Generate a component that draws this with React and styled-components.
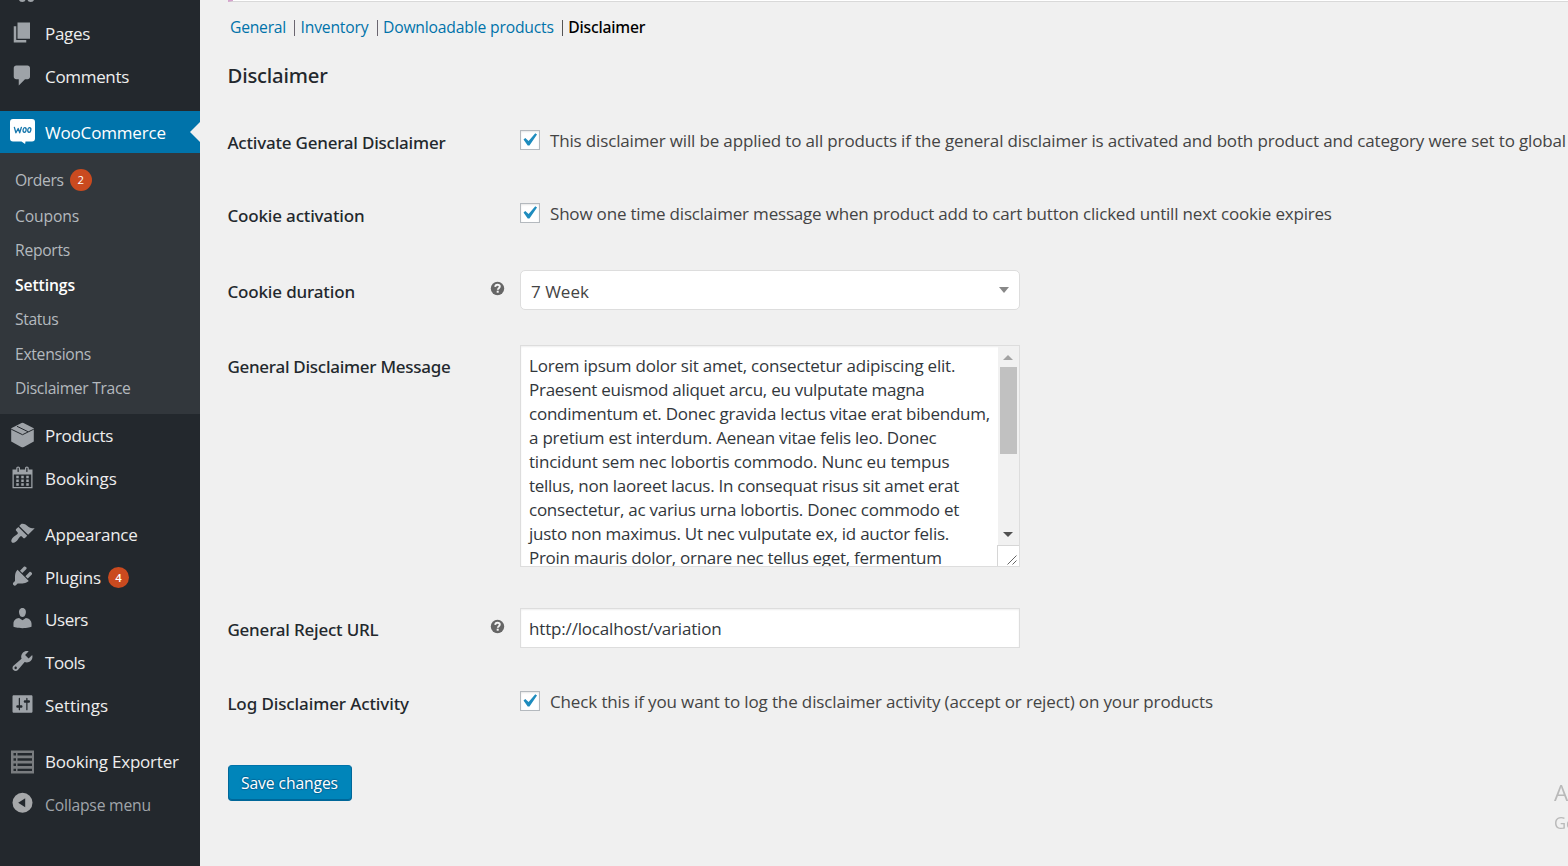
import React from 'react';
import styled, { createGlobalStyle, css } from 'styled-components';

const GlobalStyle = createGlobalStyle`
  * { box-sizing: border-box; }
  html, body { margin: 0; padding: 0; }
  body {
    background: #f0f0f0;
    color: #444;
    font-family: "Open Sans", "Noto Sans", sans-serif;
    font-size: 17px;
    overflow: hidden;
  }
`;

const Page = styled.div`
  display: flex;
  width: 1568px;
  height: 866px;
  overflow: hidden;
`;

/* ---------- admin menu ---------- */

const Sidebar = styled.nav`
  width: 200px;
  flex: none;
  background: #23282d;
  display: flex;
  flex-direction: column;
  overflow: hidden;
`;

const PeekRow = styled.div`
  display: flex;
  align-items: flex-start;
  flex: none;
  height: 12.2px;
  padding-left: 18px;
`;

const MenuRow = styled.a`
  position: relative;
  display: flex;
  align-items: center;
  flex: none;
  height: ${(p) => (p.$active ? 42 : 42.8)}px;
  padding-left: 10px;
  color: ${(p) => (p.$muted ? '#a0a5aa' : p.$active ? '#fff' : '#eee')};
  background: ${(p) => (p.$active ? '#0073aa' : 'transparent')};
  font-size: ${(p) => (p.$muted ? 15.7 : 17)}px;
  svg { flex: none; margin-right: 10px; }
  > span:first-of-type { padding-top: ${(p) => (p.$active ? 2 : 1.2)}px; }
`;

const Pointer = styled.span`
  position: absolute;
  right: 0;
  top: 11px;
  border: 10px solid transparent;
  border-right-color: #f0f0f0;
  border-left: 0;
`;

const Gap = styled.div`
  flex: none;
  height: ${(p) => p.$h}px;
`;

const Label = styled.span`
  white-space: pre;
  line-height: 24px;
  letter-spacing: ${(p) => p.$ls || 0}px;
`;

const Badge = styled.span`
  display: flex;
  align-items: center;
  justify-content: center;
  width: ${(p) => p.$size}px;
  height: ${(p) => p.$size}px;
  margin-left: ${(p) => (p.$bold ? 7 : 6.3)}px;
  border-radius: 50%;
  background: #ca4a1f;
  color: #fff;
  font-size: 11.3px;
  font-weight: ${(p) => (p.$bold ? 600 : 400)};
`;

const SubMenu = styled.div`
  flex: none;
  height: 261px;
  padding: 8px 0 0 15px;
  background: #32373c;
  display: flex;
  flex-direction: column;
`;

const SubRow = styled.a`
  display: flex;
  align-items: center;
  flex: none;
  height: ${(p) => p.$h || 34.45}px;
  font-size: 15.7px;
  color: #b4b9be;
  ${(p) => p.$current && css`
    color: #fff;
    font-weight: 600;
  `}
`;

/* ---------- content ---------- */

const Main = styled.main`
  flex: 1;
  min-width: 0;
  padding-left: 28px;
  overflow: hidden;
`;

const Notice = styled.div`
  height: 2px;
  background: #fff;
  border-left: 5px solid #d5a5cd;
  border-bottom: 1px solid #d9d9d9;
`;

const Tabs = styled.div`
  display: flex;
  align-items: center;
  height: 24px;
  margin: 13px 0 0 2px;
  font-size: 15.7px;
  color: #0073aa;
`;

const Bar = styled.span`
  width: 1px;
  height: 16px;
  margin: 1px 5px 0 8.5px;
  background: ${(p) => (p.$dark ? '#555' : '#6b6670')};
`;

const CurrentTab = styled(Label)`
  color: #000;
  font-family: "Noto Sans", sans-serif;
  font-weight: 500;
`;

const Heading = styled.h2`
  margin: 20px 0 0 -0.5px;
  height: 32px;
  color: #23282d;
  font: 500 20.3px/32px "Noto Sans", sans-serif;
  letter-spacing: -0.2px;
`;

const FieldRow = styled.div`
  display: grid;
  grid-template-columns: 262px 30px auto;
  justify-content: start;
  align-items: start;
  height: ${(p) => p.$h}px;
`;

const FieldLabel = styled(Label)`
  margin-left: -0.6px;
  padding-top: 1px;
  color: #23282d;
  font-family: "Noto Sans", sans-serif;
  font-weight: 500;
`;

const TipCell = styled.div`
  height: 0;
  margin-top: -1px;
`;

const Control = styled.div`
  margin-top: ${(p) => p.$top}px;
`;

const CheckLine = styled.label`
  display: flex;
  align-items: center;
  height: 24px;
  gap: 10px;
  > span:last-child { padding-top: 2px; }
`;

const CheckBox = styled.span`
  flex: none;
  width: 20px;
  height: 20px;
  margin-top: -1px;
  border: 1px solid #b4b9be;
  background: #fff;
  box-shadow: inset 0 1px 2px rgba(0, 0, 0, 0.1);
  display: flex;
  svg { margin: -3.6px 0 0 -5px; flex: none; }
`;

const Select = styled.div`
  width: 500px;
  height: 40px;
  border: 1px solid #ddd;
  border-radius: 5px;
  background: #fff;
  padding: 0 10px 0 10px;
  display: flex;
  align-items: center;
  justify-content: space-between;
  color: #444;
  > span:first-child { padding-top: 4px; }
`;

const Arrow = styled.span`
  display: block;
  width: 0;
  height: 0;
  border: 5px solid transparent;
  ${(p) => (p.$up
    ? css`border-bottom: ${p.$h}px solid ${p.$color}; border-top: 0;`
    : css`border-top: ${p.$h}px solid ${p.$color}; border-bottom: 0;`)}
`;

const Area = styled.div`
  width: 500px;
  height: 222px;
  display: flex;
  border: 1px solid #ddd;
  background: #fff;
  box-shadow: inset 0 1px 2px rgba(0, 0, 0, 0.07);
`;

const AreaText = styled.div`
  flex: 1;
  min-width: 0;
  height: 220px;
  overflow: hidden;
  padding: 8px 0 0 8px;
  color: #32373c;
  display: flex;
  flex-direction: column;
  span { flex: none; }
`;

const ScrollBar = styled.div`
  width: 21px;
  display: flex;
  flex-direction: column;
  align-items: center;
  background: #f1f1f1;
`;

const UpBox = styled.div`
  flex: none;
  height: 21px;
  padding-top: 9px;
  margin-left: -1px;
`;

const Thumb = styled.div`
  flex: none;
  width: 17px;
  height: 87px;
  background: #c1c1c1;
`;

const DownBox = styled.div`
  flex: none;
  margin: auto 0 0 -1px;
  height: 13px;
`;

const Grip = styled.div`
  width: 22px;
  height: 21px;
  margin-left: -1px;
  flex: none;
  background: #fff;
  border: 1px solid #d6d6d6;
  border-width: 1px 0 0 1px;
`;

const Input = styled.div`
  width: 500px;
  height: 40px;
  border: 1px solid #ddd;
  background: #fff;
  box-shadow: inset 0 1px 2px rgba(0, 0, 0, 0.07);
  padding: 1px 8px 0;
  display: flex;
  align-items: center;
  color: #32373c;
`;

const SaveButton = styled.button`
  display: flex;
  align-items: center;
  justify-content: center;
  width: 124px;
  height: 36px;
  padding: 0 1px 0 0;
  border: 1px solid #0073aa;
  border-color: #0073aa #006799 #006799;
  border-radius: 4px;
  background: #0085ba;
  box-shadow: inset 0 -1px 0 #006799;
  color: #fff;
  font: 400 15.7px "Open Sans", sans-serif;
  text-shadow: 0 -1px 1px #006799, 1px 0 1px #006799, 0 1px 1px #006799, -1px 0 1px #006799;
`;

const Watermark = styled.div`
  position: fixed;
  left: 1554px;
  top: 778px;
  width: 14px;
  overflow: hidden;
  white-space: nowrap;
  color: #b9b9b9;
  font-size: 22.5px;
  line-height: 30px;
`;

const WatermarkSmall = styled.div`
  font-size: 16.6px;
  line-height: 30px;
`;

/* ---------- icons ---------- */

const PATHS = {
  pages: 'M6 15V2h10v13H6zm-1 1h8v2H3V5h2v11z',
  comments: 'M5 2h9c1.1 0 2 .9 2 2v7c0 1.1-.9 2-2 2h-2l-5 5v-5H5c-1.1 0-2-.9-2-2V4c0-1.1.9-2 2-2z',
  calendar: 'M15 4h3v15H2V4h3V3c0-.41.15-.76.44-1.06.29-.29.65-.44 1.06-.44s.77.15 1.06.44c.29.3.44.65.44 1.06v1h4V3c0-.41.15-.76.44-1.06.29-.29.65-.44 1.06-.44s.77.15 1.06.44c.29.3.44.65.44 1.06v1zM6 3v2.5c0 .14.05.26.15.36.09.09.21.14.35.14s.26-.05.35-.14c.1-.1.15-.22.15-.36V3c0-.14-.05-.26-.15-.35-.09-.1-.21-.15-.35-.15s-.26.05-.35.15c-.1.09-.15.21-.15.35zm7 0v2.5c0 .14.05.26.14.36.1.09.22.14.36.14s.26-.05.36-.14c.09-.1.14-.22.14-.36V3c0-.14-.05-.26-.14-.35-.1-.1-.22-.15-.36-.15s-.26.05-.36.15c-.09.09-.14.21-.14.35zm4 15V8H3v10h14zM7 9v2H5V9h2zm2 0h2v2H9V9zm4 2V9h2v2h-2zm-6 1v2H5v-2h2zm2 0h2v2H9v-2zm4 2v-2h2v2h-2zm-6 1v2H5v-2h2zm4 2H9v-2h2v2zm4 0h-2v-2h2v2z',
  appearance: 'M14.48 11.06L7.41 3.99l1.5-1.5c.5-.56 2.3-.47 3.51.32 1.21.8 1.43 1.28 2.91 2.1 1.18.64 2.45 1.26 4.45.85zm-.71.71L6.7 4.7 4.93 6.47c-.39.39-.39 1.02 0 1.41l1.06 1.06c.39.39.39 1.03 0 1.42-.6.6-1.43 1.11-2.21 1.69-.35.26-.7.53-1.01.84C1.43 14.23.4 16.08 1.4 17.07c.99 1 2.84-.03 4.18-1.36.31-.31.58-.66.85-1.02.57-.78 1.08-1.61 1.69-2.21.39-.39 1.02-.39 1.41 0l1.06 1.06c.39.39 1.02.39 1.41 0z',
  plugins: 'M13.11 4.36L9.87 7.6 8 5.73l3.24-3.24c.35-.34 1.05-.2 1.56.32.52.51.66 1.21.31 1.55zm-8 1.77l.91-1.12 9.01 9.01-1.19.84c-.71.71-2.63 1.16-3.82 1.16H6.14L4.9 17.26c-.59.59-1.54.59-2.12 0-.59-.58-.59-1.53 0-2.12l1.24-1.24v-3.88c0-1.13.4-3.19 1.09-3.89zm7.26 3.97l3.24-3.24c.34-.35 1.04-.21 1.55.31.52.51.66 1.21.31 1.55l-3.24 3.25z',
  users: 'M10 9.25c-2.27 0-2.73-3.44-2.73-3.44C7 4.02 7.82 2 9.97 2c2.16 0 2.98 2.02 2.71 3.81 0 0-.41 3.44-2.68 3.44zm0 2.57L12.72 10c2.39 0 4.52 2.33 4.52 4.53v2.49s-3.65 1.13-7.24 1.13c-3.65 0-7.24-1.13-7.24-1.13v-2.49c0-2.25 1.94-4.48 4.47-4.48z',
  tools: 'M16.68 9.77c-1.34 1.34-3.3 1.67-4.95.99l-5.41 6.52c-.99.99-2.59.99-3.58 0s-.99-2.59 0-3.57l6.52-5.42c-.68-1.65-.35-3.61.99-4.95 1.28-1.28 3.12-1.62 4.72-1.06l-2.89 2.89 2.82 2.82 2.86-2.87c.53 1.58.18 3.39-1.08 4.65zM3.81 16.21c.4.39 1.04.39 1.43 0 .4-.4.4-1.04 0-1.43-.39-.4-1.03-.4-1.43 0-.39.39-.39 1.03 0 1.43z',
  settings: 'M18 16V4c0-.55-.45-1-1-1H3c-.55 0-1 .45-1 1v12c0 .55.45 1 1 1h14c.55 0 1-.45 1-1zM8 11h1c.55 0 1 .45 1 1s-.45 1-1 1H8v1.5c0 .28-.22.5-.5.5s-.5-.22-.5-.5V13H6c-.55 0-1-.45-1-1s.45-1 1-1h1V5.5c0-.28.22-.5.5-.5s.5.22.5.5V11zm5-2h-1c-.55 0-1-.45-1-1s.45-1 1-1h1V5.5c0-.28.22-.5.5-.5s.5.22.5.5V7h1c.55 0 1 .45 1 1s-.45 1-1 1h-1v5.5c0 .28-.22.5-.5.5s-.5-.22-.5-.5V9z',
};

const MenuGlyph = styled.svg`
  width: 25px;
  height: 25px;
  fill: ${(p) => p.$color || '#9ea3a8'};
  transform: translateY(${(p) => p.$dy || 0}px);
`;

const Dash = ({ name, dy = -1.5 }) => (
  <MenuGlyph viewBox="0 0 20 20" $dy={dy}>
    <path fillRule="evenodd" d={PATHS[name]} />
  </MenuGlyph>
);

const WooIcon = () => (
  <MenuGlyph viewBox="0 0 25 25" $color="#fff">
    <path d="M3 0h19a3 3 0 0 1 3 3v16.5a3 3 0 0 1-3 3h-6.5l-.4 2.5-3.6-2.5H3a3 3 0 0 1-3-3V3a3 3 0 0 1 3-3z" />
    <g fill="none" stroke="#1878ad" strokeWidth="1.3" strokeLinecap="round" strokeLinejoin="round">
      <path d="M4.400 8.300l1.500 5.500 2.300-4.300 1.500 4.300 1.700-5.500" />
      <ellipse cx="14.600" cy="11" rx="1.5" ry="2.3" transform="rotate(12 14.6 11)" />
      <ellipse cx="19.300" cy="11" rx="1.5" ry="2.3" transform="rotate(12 19.3 11)" />
    </g>
  </MenuGlyph>
);

const BoxIcon = () => (
  <MenuGlyph viewBox="0 0 25 25" $dy={-0.5}>
    <path d="M12.5 0L23.8 5.7v13.2L12.5 25.2 1.2 18.9V5.7z" />
    <path d="M1.2 6.7l11.3 5.5 11.3-5.5M7 3.8l11 5.4" fill="none" stroke="#23282d" strokeWidth="1" />
  </MenuGlyph>
);

const ListIcon = () => (
  <MenuGlyph viewBox="0 0 25 25" $color="#797c7f" $dy={0.5}>
    <path d="M1 1h23v23H1z" />
    <path d="M3.5 4.8H6M7.5 4.8H22M3.5 10H6M7.5 10H22M3.5 15.2H6M7.5 15.2H22M3.5 20.4H6M7.5 20.4H22" stroke="#23282d" strokeWidth="2.4" />
  </MenuGlyph>
);

const CollapseIcon = () => (
  <MenuGlyph viewBox="0 0 25 25" $color="#a6a8aa" $dy={-1.8}>
    <circle cx="12.5" cy="12.5" r="10" />
    <path d="M15.2 8v9l-7-4.500z" fill="#23282d" />
  </MenuGlyph>
);

const Check = () => (
  <svg width="26" height="26" viewBox="0 0 20 20">
    <path fill="#1e8cbe" d="M14.83 4.89l1.34.94-5.81 8.38H9.02L5.78 9.67l1.34-1.25 2.57 2.4z" />
  </svg>
);

const HelpTip = () => (
  <svg width="15" height="15" viewBox="0 0 15 15">
    <circle cx="7.5" cy="7.5" r="6.7" fill="#666" />
    <path d="M5.2 5.9c.1-1.500 1-2.200 2.300-2.200s2.300.8 2.300 1.900c0 1.600-2 1.500-2 3.200" fill="none" stroke="#f4f4f4" strokeWidth="1.9" />
    <rect x="6.7" y="9.7" width="2" height="2" fill="#f4f4f4" />
  </svg>
);

/* ---------- data ---------- */

const SUB_ITEMS = [
  ['Coupons', -0.16], ['Reports', -0.29], ['Settings', -0.1, true],
  ['Status', -0.36], ['Extensions', -0.3], ['Disclaimer Trace', -0.33],
];

const MESSAGE = [
  ['Lorem ipsum dolor sit amet, consectetur adipiscing elit.', -0.215],
  ['Praesent euismod aliquet arcu, eu vulputate magna', -0.27],
  ['condimentum et. Donec gravida lectus vitae erat bibendum,', -0.224],
  ['a pretium est interdum. Aenean vitae felis leo. Donec', -0.225],
  ['tincidunt sem nec lobortis commodo. Nunc eu tempus', -0.205],
  ['tellus, non laoreet lacus. In consequat risus sit amet erat', -0.27],
  ['consectetur, ac varius urna lobortis. Donec commodo et', -0.249],
  ['justo non maximus. Ut nec vulputate ex, id auctor felis.', -0.249],
  ['Proin mauris dolor, ornare nec tellus eget, fermentum', -0.285],
];

const Item = ({ icon, text, ls, badge }) => (
  <MenuRow>
    {icon}
    <Label $ls={ls}>{text}</Label>
    {badge && <Badge $size={21} $bold>{badge}</Badge>}
  </MenuRow>
);

const CheckField = ({ label, labelLs, text, ls, h }) => (
  <FieldRow $h={h}>
    <FieldLabel $ls={labelLs}>{label}</FieldLabel>
    <span />
    <Control $top={-2}>
      <CheckLine>
        <CheckBox><Check /></CheckBox>
        <Label $ls={ls}>{text}</Label>
      </CheckLine>
    </Control>
  </FieldRow>
);

export default function App() {
  return (
    <Page>
      <GlobalStyle />
      <Sidebar>
        <PeekRow>
          <svg width="20" height="3" viewBox="0 0 20 3">
            <path d="M1 0h6.500a3.300 2.500 0 0 1-6.500 0zM9.500 0h6.500a3.300 2.500 0 0 1-6.500 0z" fill="#9ea3a8" />
          </svg>
        </PeekRow>
        <Item icon={<Dash name="pages" dy={-1} />} text="Pages" ls={-0.31} />
        <Item icon={<Dash name="comments" dy={-1} />} text="Comments" ls={-0.32} />
        <Gap $h={13.2} />
        <MenuRow $active>
          <WooIcon />
          <Label $ls={-0.18}>WooCommerce</Label>
          <Pointer />
        </MenuRow>
        <SubMenu>
          <SubRow $h={37.6}>
            <Label $ls={-0.4}>Orders</Label>
            <Badge $size={22}>2</Badge>
          </SubRow>
          {SUB_ITEMS.map(([text, ls, current]) => (
            <SubRow key={text} $current={current}>
              <Label $ls={ls}>{text}</Label>
            </SubRow>
          ))}
        </SubMenu>
        <Item icon={<BoxIcon />} text="Products" ls={-0.316} />
        <Item icon={<Dash name="calendar" />} text="Bookings" ls={-0.08} />
        <Gap $h={13.3} />
        <Item icon={<Dash name="appearance" dy={-1} />} text="Appearance" ls={-0.25} />
        <Item icon={<Dash name="plugins" />} text="Plugins" ls={-0.14} badge="4" />
        <Item icon={<Dash name="users" />} text="Users" ls={-0.42} />
        <Item icon={<Dash name="tools" />} text="Tools" ls={-0.44} />
        <Item icon={<Dash name="settings" />} text="Settings" />
        <Gap $h={13.3} />
        <Item icon={<ListIcon />} text="Booking Exporter" ls={-0.22} />
        <MenuRow $muted>
          <CollapseIcon />
          <Label $ls={-0.2}>Collapse menu</Label>
        </MenuRow>
      </Sidebar>

      <Main>
        <Notice />
        <Tabs>
          <Label $ls={-0.25}>General</Label>
          <Bar />
          <Label $ls={-0.18}>Inventory</Label>
          <Bar />
          <Label $ls={-0.184}>Downloadable products</Label>
          <Bar $dark />
          <CurrentTab $ls={-0.2}>Disclaimer</CurrentTab>
        </Tabs>
        <Heading>Disclaimer</Heading>
        <Gap $h={39} />

        <CheckField
          h={73}
          label="Activate General Disclaimer"
          labelLs={-0.209}
          text="This disclaimer will be applied to all products if the general disclaimer is activated and both product and category were set to global"
          ls={-0.154}
        />
        <CheckField
          h={76}
          label="Cookie activation"
          labelLs={-0.167}
          text="Show one time disclaimer message when product add to cart button clicked untill next cookie expires"
          ls={-0.19}
        />
        <FieldRow $h={75}>
          <FieldLabel $ls={-0.151}>Cookie duration</FieldLabel>
          <TipCell><HelpTip /></TipCell>
          <Control $top={-9}>
            <Select>
              <Label>7 Week</Label>
              <Arrow $h={6} $color="#888" />
            </Select>
          </Control>
        </FieldRow>
        <FieldRow $h={263}>
          <FieldLabel $ls={-0.27}>General Disclaimer Message</FieldLabel>
          <span />
          <Control $top={-9}>
            <Area>
              <AreaText>
                {MESSAGE.map(([text, ls]) => <Label key={text} $ls={ls}>{text}</Label>)}
              </AreaText>
              <ScrollBar>
                <UpBox><Arrow $up $h={5} $color="#a3a3a3" /></UpBox>
                <Thumb />
                <DownBox><Arrow $h={5} $color="#505050" /></DownBox>
                <Grip>
                  <svg width="20" height="20" viewBox="0 0 20 20">
                    <path d="M9.5 18.5l9-9M14.5 18.5l4-4" stroke="#666" strokeWidth="1" fill="none" />
                  </svg>
                </Grip>
              </ScrollBar>
            </Area>
          </Control>
        </FieldRow>
        <FieldRow $h={74}>
          <FieldLabel $ls={-0.201}>General Reject URL</FieldLabel>
          <TipCell><HelpTip /></TipCell>
          <Control $top={-9}>
            <Input><Label $ls={-0.17}>http://localhost/variation</Label></Input>
          </Control>
        </FieldRow>
        <CheckField
          h={74}
          label="Log Disclaimer Activity"
          labelLs={-0.111}
          text="Check this if you want to log the disclaimer activity (accept or reject) on your products"
          ls={-0.131}
        />
        <SaveButton><Label $ls={-0.116}>Save changes</Label></SaveButton>
      </Main>

      <Watermark>
        Activate
        <WatermarkSmall>Go to</WatermarkSmall>
      </Watermark>
    </Page>
  );
}
